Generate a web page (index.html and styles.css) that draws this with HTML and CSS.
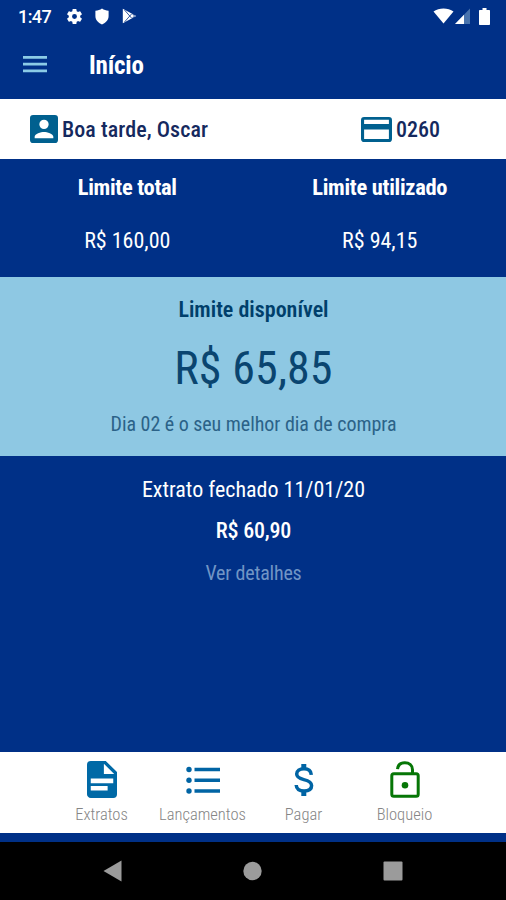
FILE: index.html
```html
<!DOCTYPE html>
<html lang="pt-BR">
<head>
<meta charset="utf-8">
<title>Início</title>
<link rel="stylesheet" href="styles.css">
</head>
<body>
<div class="statusbar">
  <span class="clock">1:47</span>
  <svg class="gear" width="19" height="19" viewBox="0 0 24 24" fill="#fff"><path d="M19.14 12.94c.04-.3.06-.61.06-.94 0-.32-.02-.64-.07-.94l2.03-1.58a.49.49 0 0 0 .12-.61l-1.92-3.32a.49.49 0 0 0-.59-.22l-2.39.96c-.5-.38-1.03-.7-1.62-.94l-.36-2.54a.48.48 0 0 0-.48-.41h-3.84c-.24 0-.43.17-.47.41l-.36 2.54c-.59.24-1.13.57-1.62.94l-2.39-.96c-.22-.08-.47 0-.59.22L2.74 8.87c-.12.21-.08.47.12.61l2.03 1.58c-.05.3-.09.63-.09.94s.02.64.07.94l-2.03 1.58a.49.49 0 0 0-.12.61l1.92 3.32c.12.22.37.29.59.22l2.39-.96c.5.38 1.03.7 1.62.94l.36 2.54c.05.24.24.41.48.41h3.84c.24 0 .44-.17.47-.41l.36-2.54c.59-.24 1.13-.56 1.62-.94l2.39.96c.22.08.47 0 .59-.22l1.92-3.32c.12-.22.07-.47-.12-.61l-2.01-1.58zM12 15.100A3.100 3.100 0 1 1 12 8.900a3.100 3.100 0 0 1 0 6.200z"/></svg>
  <svg class="shield" width="14" height="17" viewBox="0 0 14 17" fill="#fff"><path d="M7 .5C9 2 11 2.500 13.600 2.700V8c0 4-2.600 6.800-6.600 8.500C3 14.800.4 12 .4 8V2.700C3 2.500 5 2 7 .5z"/></svg>
  <svg class="play" width="15" height="16" viewBox="0 0 15 16"><path d="M.8.8 14.200 8 .8 15.200z" fill="#fff"/><path d="M2.500 2 9.500 10M2.500 14 9.500 6M10.500 5.800 12.500 8l-2 2.200" fill="none" stroke="#003087" stroke-width=".8"/></svg>
  <svg class="wifi" width="21" height="16" viewBox="0 0 21 16" fill="#fff"><path d="M.5 3.500C6-.4 15-.4 20.500 3.500L10.500 15.500z"/></svg>
  <svg class="signal" width="15" height="16" viewBox="0 0 15 16"><path d="M15 .5V16H0z" fill="#4873ad"/><path d="M9 6.700V16H0z" fill="#fff"/></svg>
  <svg class="battery" width="11" height="17" viewBox="0 0 11 17" fill="#fff"><path d="M3.500 0h4v2H10c.6 0 1 .4 1 1v13c0 .6-.4 1-1 1H1c-.6 0-1-.4-1-1V3c0-.6.400-1 1-1h2.500z"/></svg>
</div>
<header class="appbar">
  <svg class="menu" width="24" height="18" viewBox="0 0 24 18" fill="#8bcbe6"><path d="M0 1h24v2.700H0zM0 7.700h24v2.700H0zM0 14.500h24v2.700H0z"/></svg>
  <h1 class="title">Início</h1>
</header>
<section class="user">
  <div class="cell greeting">
    <svg width="28" height="28" viewBox="3 3 18 18" fill="#00608f"><path d="M3 5v14a2 2 0 0 0 2 2h14a2 2 0 0 0 2-2V5a2 2 0 0 0-2-2H5a2 2 0 0 0-2 2zm12 4a3 3 0 1 1-6 0 3 3 0 0 1 6 0zm-9 8c0-2 4-3.100 6-3.100s6 1.100 6 3.100v1H6z"/></svg>
    <span>Boa tarde, Oscar</span>
  </div>
  <div class="cell card">
    <svg width="31" height="25" viewBox="2 4 20 16" preserveAspectRatio="none" fill="#00608f"><path d="M20 4H4a2 2 0 0 0-2 2v12c0 1.110.890 2 2 2h16a2 2 0 0 0 2-2V6a2 2 0 0 0-2-2zm0 14H4v-6h16zm0-9.500H4V5.700h16z"/></svg>
    <span>0260</span>
  </div>
</section>
<section class="limits">
  <div class="limit"><h2>Limite total</h2><p>R$ 160,00</p></div>
  <div class="limit"><h2>Limite utilizado</h2><p>R$ 94,15</p></div>
</section>
<section class="available">
  <h2 class="available-title">Limite disponível</h2>
  <p class="amount">R$ 65,85</p>
  <p class="tip">Dia 02 é o seu melhor dia de compra</p>
</section>
<main class="statement">
  <p class="closed">Extrato fechado 11/01/20</p>
  <p class="closed-value">R$ 60,90</p>
  <a class="details">Ver detalhes</a>
</main>
<nav class="tabs">
  <a class="tab"><svg width="30" height="37" viewBox="4 2 16 20" preserveAspectRatio="none" fill="#0069a6"><path d="M14 2H6a2 2 0 0 0-2 2v16c0 1.100.890 2 2 2h12a2 2 0 0 0 2-2V8zM15 18H6v-2.500h9zM18 14H6v-2.500h12zM13 9V3.500L18.500 9z"/></svg><span>Extratos</span></a>
  <a class="tab"><svg width="34" height="37" viewBox="0 0 34 37" fill="#0064a4"><path d="M8.500 6.700H34v3.600H8.500zM8.500 17.400H34V21H8.500zM8.500 28.200H34v3.600H8.500z"/><circle cx="3" cy="8.500" r="2.700"/><circle cx="3" cy="19.200" r="2.700"/><circle cx="3" cy="30" r="2.700"/></svg><span>Lançamentos</span></a>
  <a class="tab"><svg width="20" height="37" viewBox="0 0 20 37" fill="none" stroke="#0064a4" stroke-width="3.500"><path d="M17.300 13.800C17 9.500 14 7.800 10 7.800c-4.500 0-7.300 2-7.300 5.300 0 3 2.200 4.400 7.100 5.500 5.500 1.300 7.800 2.700 7.800 6 0 3.700-3 5.400-7.500 5.400-4.600 0-7.600-1.800-7.900-6"/><path d="M9.800 3v5M9.800 30v5" stroke-width="5"/></svg><span>Pagar</span></a>
  <a class="tab"><svg width="30" height="37" viewBox="0 0 30 37" fill="none" stroke="#067606" stroke-width="3"><rect x="1.800" y="12.800" width="26.400" height="22.500" rx="2"/><path d="M7.500 8.200C8 3.800 11 1.700 14.800 1.700c4.500 0 7.700 2.800 7.700 7V13"/><circle cx="15" cy="24.300" r="3.300" fill="#067606" stroke="none"/></svg><span>Bloqueio</span></a>
</nav>
<footer class="sysnav">
  <svg width="19" height="22" viewBox="0 0 19 22" fill="#9b9b9b"><path d="M18.500 .5v21L.5 11z"/></svg>
  <svg width="19" height="22" viewBox="0 0 19 22" fill="#9b9b9b"><circle cx="9.500" cy="11" r="9.200"/></svg>
  <svg width="20" height="22" viewBox="0 0 20 22" fill="#9b9b9b"><rect x=".5" y="1.500" width="19" height="19" rx="1"/></svg>
</footer>
</body>
</html>
```
FILE: styles.css
```css
* { box-sizing: border-box; margin: 0; padding: 0; }
body {
  width: 506px; height: 900px; overflow: hidden;
  display: flex; flex-direction: column;
  background: #003087; color: #fff;
  font-family: "Roboto Condensed", Roboto, sans-serif;
  font-stretch: 75%;
  white-space: nowrap;
}
svg { display: block; flex: none; }
.statusbar { height: 32px; display: flex; align-items: center; padding: 0 16px 0 18px; }
.clock { font-family: Roboto, sans-serif; font-stretch: 100%; font-size: 18px; letter-spacing: -.6px; font-weight: 500; width: 47px; }
.shield { margin-left: 11px; }
.play { margin-left: 13px; }
.wifi { margin-left: auto; }
.signal { margin-left: 1px; }
.battery { margin-left: 9px; }
.appbar { height: 67px; display: flex; align-items: center; padding: 0 23px; gap: 42px; }
.menu { margin-bottom: 3px; }
.title { font-size: 25px; letter-spacing: -.2px; font-weight: 700; }
.user { height: 60px; display: flex; background: #fff; color: #15295e; font-size: 22px; font-weight: 500; }
.cell { display: flex; align-items: center; gap: 4px; }
.greeting { width: 361px; padding-left: 30px; letter-spacing: .08px; }
.limits { height: 118px; display: flex; padding-left: 1px; }
.limit { flex: 1; text-align: center; padding-top: 14px; }
.limit h2 { font-size: 22.500px; letter-spacing: -.3px; line-height: 28px; font-weight: 700; }
.limit p { font-size: 22px; line-height: 28px; margin-top: 26px; }
.available { height: 179px; background: #8ec8e3; color: #0a4570; text-align: center; padding-top: 19px; padding-left: 1px; }
.available-title { font-size: 22px; line-height: 28px; font-weight: 600; color: #003f6b; }
.amount { font-size: 46px; letter-spacing: .1px; line-height: 54px; margin-top: 17px; font-weight: 400; }
.tip { font-size: 20px; line-height: 24px; margin-top: 17px; color: #2b6288; letter-spacing: -.04px; }
.statement { flex: 1; display: flex; flex-direction: column; align-items: center; padding-top: 20px; padding-left: 1px; }
.closed { font-size: 22px; line-height: 28px; }
.closed-value { font-size: 22px; letter-spacing: -.2px; line-height: 28px; margin-top: 13px; font-weight: 500; }
.details { font-size: 20px; letter-spacing: -.2px; line-height: 26px; margin-top: 15px; color: #7195c5; font-weight: 400; }
.tabs { height: 81px; margin-bottom: 9px; padding: 0 51px; display: flex; background: #fff; }
.tab { width: 101px; display: flex; flex-direction: column; align-items: center; padding-top: 9px; color: #858585; font-size: 16.500px; line-height: 20px; font-weight: 300; }
.tab span { margin-top: 7px; }
.sysnav { height: 58px; background: #000; display: flex; align-items: center; justify-content: space-between; padding: 0 103px; }
```
